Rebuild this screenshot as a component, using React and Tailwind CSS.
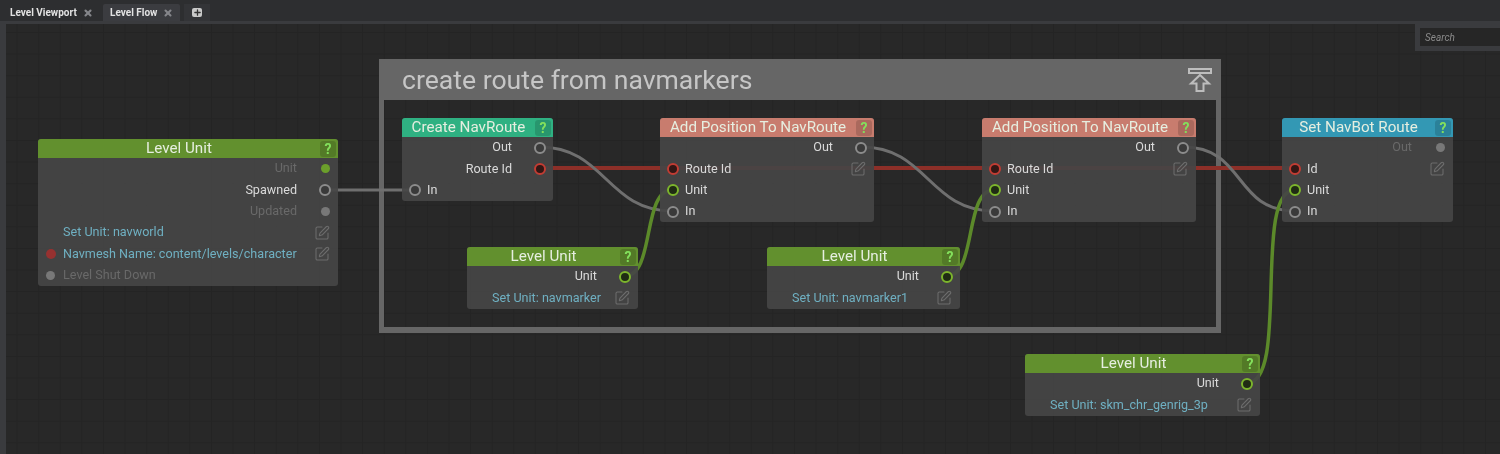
import { SquarePen, X, Plus } from "lucide-react";

const GREEN = "bg-[#62902e]";
const TEAL = "bg-[#2fb182]";
const SALMON = "bg-[#c87c6e]";
const BLUE = "bg-[#3398b4]";

const portClass = {
  greenFill: "w-[9px] h-[9px] bg-[#6b9f2b]",
  grayFill: "w-[9px] h-[9px] bg-[#787878]",
  redFill: "w-[10px] h-[10px] bg-[#973130]",
  gray: "w-[12px] h-[12px] border-2 border-[#8c8c8c] bg-[#3a3a3a]",
  red: "w-[12px] h-[12px] border-2 border-[#c23c33] bg-[#331715]",
  green: "w-[12px] h-[12px] border-2 border-[#7cb52c] bg-[#202c14]",
};

const labelClass = {
  white: "text-[#dadada]",
  dim: "text-[#696969]",
  blue: "text-[#6fb0c2]",
};

function Port({ type }) {
  return <span className={`rounded-full shrink-0 ${portClass[type]}`} />;
}

function Row({ left, right, label, tone = "white", edit, alignRight }) {
  return (
    <div className="flex items-center h-[21.33px]">
      <div className="w-[25px] shrink-0 flex justify-center">{left && <Port type={left} />}</div>
      <div className={`flex-1 min-w-0 whitespace-nowrap ${alignRight ? "text-right" : ""} ${labelClass[tone]}`}>{label}</div>
      <div className="w-[41px] shrink-0 flex justify-end pr-[7px]">
        {right && <span className="w-[12px] flex justify-center"><Port type={right} /></span>}
        {edit && <SquarePen size={16} strokeWidth={1.6} className="text-[#6c6c6c] mr-[1px]" />}
      </div>
    </div>
  );
}

function Node({ pos, title, head, rows }) {
  return (
    <div className={`absolute z-20 rounded-[3px] bg-[#454545]/92 text-[12.6px] leading-none overflow-hidden ${pos}`}>
      <div className={`flex items-center h-[19px] ${head}`}>
        <div className="flex-1 text-center text-[15.2px] text-[#e6eee0] whitespace-nowrap">{title}</div>
        <div className="w-[16px] h-[16px] mr-[2px] rounded-[3px] bg-black/15 flex items-center justify-center text-[14px] font-bold text-[#83e05c]">?</div>
      </div>
      {rows.map((r, i) => (
        <Row key={i} {...r} />
      ))}
    </div>
  );
}

function Wires() {
  return (
    <svg className="absolute inset-0 z-10" width="1500" height="454" fill="none">
      <path d="M540 168H1295" stroke="#8d2f28" strokeWidth="4" />
      <g stroke="#6f6f6f" strokeWidth="3">
        <path d="M325 190H415" />
        <path d="M540 147C605 147 607 211 672 211" />
        <path d="M862 147C927 147 929 211 994 211" />
        <path d="M1184 147C1245 147 1234 211 1295 211" />
      </g>
      <g stroke="#5c8a2a" strokeWidth="3.5">
        <path d="M625 276C655 276 642 190 672 190" />
        <path d="M947 276C977 276 964 190 994 190" />
        <path d="M1247 383C1290 383 1252 190 1295 190" />
      </g>
    </svg>
  );
}

function CollapseIcon() {
  return (
    <svg width="24" height="24" viewBox="0 0 24 24" fill="none" stroke="#bdbdbd" strokeWidth="2">
      <path d="M1 1H23V5H1Z" />
      <path d="M12 7L21 15.5H15.5V23H8.5V15.5H3Z" />
    </svg>
  );
}

function Tab({ label, active }) {
  return (
    <div className={`flex items-center h-[17px] rounded-t-[2px] ${active ? "bg-[#3b3c40] w-[77px] pl-[7px]" : "w-[93px] pl-[10px] mr-[10px]"}`}>
      <span className={`text-[10px] font-bold text-[#e2e2e2] whitespace-nowrap ${active ? "w-[46px]" : "w-[66px]"}`}>{label}</span>
      <X size={10} strokeWidth={5} className="text-[#85868a] ml-[7px]" />
    </div>
  );
}

export default function App() {
  return (
    <div className="w-[1500px] h-[454px] relative overflow-hidden bg-[#2d2e30] font-['Roboto',sans-serif] blur-[0.35px]">
      {/* tabs */}
      <div className="h-[21px] pt-[4px] flex items-end">
        <Tab label="Level Viewport" />
        <Tab label="Level Flow" active />
        <div className="ml-[4px] w-[26px] h-[17px] bg-[#333437] flex items-center justify-center">
          <span className="w-[10px] h-[9px] rounded-[2px] bg-[#c9c9c9] flex items-center justify-center">
            <Plus size={9} strokeWidth={3.5} className="text-[#333]" />
          </span>
        </div>
      </div>

      {/* canvas */}
      <div className="absolute left-0 right-0 top-[21px] bottom-0 pl-[6px] pt-[3px] bg-[#3a3b3e]">
        <div className="w-full h-full bg-[#282828] bg-[linear-gradient(#242424_1px,transparent_1px),linear-gradient(90deg,#242424_1px,transparent_1px)] bg-[size:21.6px_21.6px] bg-[position:10.6px_8px]" />
      </div>

      {/* search */}
      <div className="absolute right-0 top-[24px] w-[85px] h-[27px] bg-[#3a3b3e] pl-[5px] pt-[4px]">
        <div className="h-[18px] bg-[#262626] pl-[5px] text-[10px] italic leading-[20px] text-[#8a8a8a]">Search</div>
      </div>

      {/* group */}
      <div className="absolute left-[379px] top-[59px] w-[842px] h-[274px] border-x-[5px] border-b-[6px] border-[#666666] flex flex-col">
        <div className="h-[41px] -mx-[1px] bg-[#666666] flex items-center justify-between pl-[19px] pr-[5px]">
          <span className="text-[26.6px] leading-none pt-[2px] text-[#c6c6c6]">create route from navmarkers</span>
          <CollapseIcon />
        </div>
      </div>

      <Wires />

      <Node
        pos="left-[38px] top-[139px] w-[300px]"
        title="Level Unit"
        head={GREEN}
        rows={[
          { label: "Unit", tone: "dim", right: "greenFill", alignRight: true },
          { label: "Spawned", right: "gray", alignRight: true },
          { label: "Updated", tone: "dim", right: "grayFill", alignRight: true },
          { label: "Set Unit: navworld", tone: "blue", edit: true },
          { label: "Navmesh Name: content/levels/character", tone: "blue", left: "redFill", edit: true },
          { label: "Level Shut Down", tone: "dim", left: "grayFill" },
        ]}
      />
      <Node
        pos="left-[402px] top-[118px] w-[151px]"
        title="Create NavRoute"
        head={TEAL}
        rows={[
          { label: "Out", right: "gray", alignRight: true },
          { label: "Route Id", right: "red", alignRight: true },
          { label: "In", left: "gray" },
        ]}
      />
      <Node
        pos="left-[660px] top-[118px] w-[214px]"
        title="Add Position To NavRoute"
        head={SALMON}
        rows={[
          { label: "Out", right: "gray", alignRight: true },
          { label: "Route Id", left: "red", edit: true },
          { label: "Unit", left: "green" },
          { label: "In", left: "gray" },
        ]}
      />
      <Node
        pos="left-[982px] top-[118px] w-[214px]"
        title="Add Position To NavRoute"
        head={SALMON}
        rows={[
          { label: "Out", right: "gray", alignRight: true },
          { label: "Route Id", left: "red", edit: true },
          { label: "Unit", left: "green" },
          { label: "In", left: "gray" },
        ]}
      />
      <Node
        pos="left-[1282px] top-[118px] w-[171px]"
        title="Set NavBot Route"
        head={BLUE}
        rows={[
          { label: "Out", tone: "dim", right: "grayFill", alignRight: true },
          { label: "Id", left: "red", edit: true },
          { label: "Unit", left: "green" },
          { label: "In", left: "gray" },
        ]}
      />
      <Node
        pos="left-[467px] top-[247px] w-[171px]"
        title="Level Unit"
        head={GREEN}
        rows={[
          { label: "Unit", right: "green", alignRight: true },
          { label: "Set Unit: navmarker", tone: "blue", edit: true },
        ]}
      />
      <Node
        pos="left-[767px] top-[247px] w-[193px]"
        title="Level Unit"
        head={GREEN}
        rows={[
          { label: "Unit", right: "green", alignRight: true },
          { label: "Set Unit: navmarker1", tone: "blue", edit: true },
        ]}
      />
      <Node
        pos="left-[1025px] top-[354px] w-[235px]"
        title="Level Unit"
        head={GREEN}
        rows={[
          { label: "Unit", right: "green", alignRight: true },
          { label: "Set Unit: skm_chr_genrig_3p", tone: "blue", edit: true },
        ]}
      />
    </div>
  );
}
